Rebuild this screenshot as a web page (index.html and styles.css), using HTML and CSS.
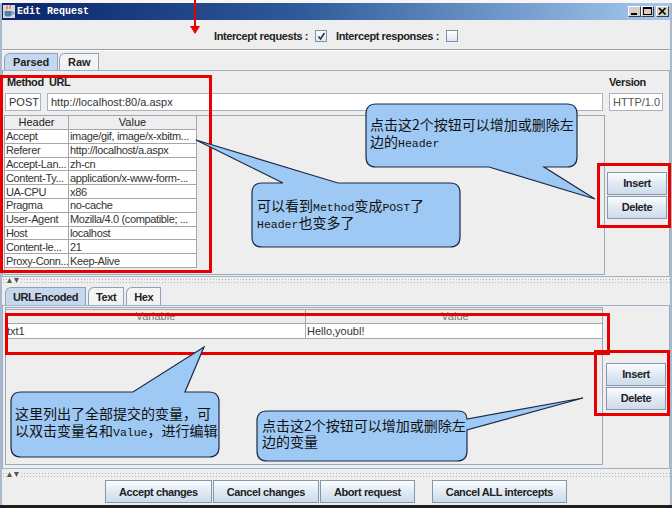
FILE: index.html
```html
<!DOCTYPE html>
<html>
<head>
  <meta charset="utf-8">
  <title>Edit Request</title>
  <link rel="stylesheet" href="styles.css">
</head>
<body>
  <div class="desktop"></div>

  <div class="window">
    <div class="titlebar">
      <svg class="app-icon" width="12" height="13" viewBox="0 0 12 13">
        <rect x="0" y="0" width="12" height="13" fill="#d9d6e6"/>
        <path d="M4 1c1.2 1-1 2 0 3.5M7 0.5c1.2 1.2-1 2 0 3.5" stroke="#e76f00" stroke-width="1.2" fill="none"/>
        <path d="M1.5 6h7v3a2.5 2.5 0 0 1-2.5 2.5h-2a2.5 2.5 0 0 1-2.5-2.5z" fill="#5382a1"/>
        <path d="M8.5 7h1.3a1.1 1.1 0 0 1 0 2.2H8.5" stroke="#5382a1" fill="none"/>
      </svg>
      <span class="title">Edit Request</span>
      <div class="controls">
        <span class="ctl"><svg width="11" height="9" viewBox="0 0 11 9"><rect x="2" y="6" width="6" height="2" fill="#000"/></svg></span>
        <span class="ctl"><svg width="11" height="9" viewBox="0 0 11 9"><rect x="1.5" y="0.5" width="8" height="7" fill="none" stroke="#000"/><rect x="1.5" y="0.5" width="8" height="1.5" fill="#000"/></svg></span>
        <span class="ctl close"><svg width="11" height="9" viewBox="0 0 11 9"><path d="M2 1l6.5 6.5M8.5 1L2 7.5" stroke="#000" stroke-width="1.7"/></svg></span>
      </div>
    </div>

    <div class="intercept">
      <span>Intercept requests :</span>
      <span class="check"><svg width="9" height="9" viewBox="0 0 9 9"><path d="M1.5 4.5l2 2.5 4-6" stroke="#22344d" stroke-width="1.6" fill="none"/></svg></span>
      <span>Intercept responses :</span>
      <span class="check"></span>
    </div>
    <div class="sep"></div>

    <div class="tabs">
      <div class="tab active">Parsed</div>
      <div class="tab">Raw</div>
    </div>
    <div class="panel top-panel">
      <div class="request-line">
        <span class="lbl">Method</span>
        <span class="lbl">URL</span>
        <span class="lbl version">Version</span>
        <div class="field">POST</div>
        <div class="field">http://localhost:80/a.aspx</div>
        <div class="field muted">HTTP/1.0</div>
      </div>
      <div class="editor-row">
        <div class="scroll headers-scroll">
          <table class="grid headers">
            <colgroup><col class="c-name"><col class="c-value"></colgroup>
            <tr><th>Header</th><th>Value</th></tr>
            <tr><td>Accept</td><td>image/gif, image/x-xbitm...</td></tr>
            <tr><td>Referer</td><td>http://localhost/a.aspx</td></tr>
            <tr><td>Accept-Lan...</td><td>zh-cn</td></tr>
            <tr><td>Content-Ty...</td><td>application/x-www-form-...</td></tr>
            <tr><td>UA-CPU</td><td>x86</td></tr>
            <tr><td>Pragma</td><td>no-cache</td></tr>
            <tr><td>User-Agent</td><td>Mozilla/4.0 (compatible; ...</td></tr>
            <tr><td>Host</td><td>localhost</td></tr>
            <tr><td>Content-le...</td><td>21</td></tr>
            <tr><td>Proxy-Conn...</td><td>Keep-Alive</td></tr>
          </table>
        </div>
        <div class="side">
          <button class="btn">Insert</button>
          <button class="btn">Delete</button>
        </div>
      </div>
    </div>

    <div class="splitter top-split">
      <div class="grip">
        <svg class="arrows" width="14" height="5" viewBox="0 0 14 5"><path d="M0 5L2.5 0 5 5z" fill="#555"/><path d="M7 0h5l-2.5 5z" fill="#555"/></svg>
      </div>
    </div>

    <div class="tabs lower">
      <div class="tab active">URLEncoded</div>
      <div class="tab">Text</div>
      <div class="tab">Hex</div>
    </div>
    <div class="panel bottom-panel">
      <div class="editor-row">
        <div class="scroll vars-scroll">
          <table class="grid vars">
            <colgroup><col class="c-var"><col class="c-val"></colgroup>
            <tr><th>Variable</th><th>Value</th></tr>
            <tr><td>txt1</td><td>Hello,youbl!</td></tr>
          </table>
        </div>
        <div class="side">
          <button class="btn">Insert</button>
          <button class="btn">Delete</button>
        </div>
      </div>
    </div>

    <div class="splitter bottom-split">
      <div class="grip">
        <svg class="arrows" width="14" height="5" viewBox="0 0 14 5"><path d="M0 5L2.5 0 5 5z" fill="#555"/><path d="M7 0h5l-2.5 5z" fill="#555"/></svg>
      </div>
    </div>

    <div class="actions">
      <button class="btn">Accept changes</button>
      <button class="btn">Cancel changes</button>
      <button class="btn">Abort request</button>
      <button class="btn far">Cancel ALL intercepts</button>
    </div>
  </div>
  <div class="taskbar"></div>

  <!-- annotations drawn over the screenshot -->
  <svg class="overlay" width="672" height="508" viewBox="0 0 672 508">
    <line x1="195" y1="0" x2="195" y2="28" stroke="#e60000" stroke-width="2"/>
    <polygon points="190,26 200,26 195,34" fill="#e60000"/>

    <g fill="none" stroke="#e60000" stroke-width="3">
      <rect x="1.5" y="76.5" width="209" height="195"/>
      <rect x="598.5" y="164.5" width="71" height="62"/>
      <rect x="6.5" y="314.5" width="602" height="39"/>
      <rect x="595.5" y="351.5" width="73" height="63"/>
    </g>

    <g fill="#9ec9f4" stroke="#1c2a48" stroke-width="1.2">
      <path d="M376,104 H567 Q577,104 577,114 V157 Q577,167 567,167 H544 L595,199 L489,167 H376 Q366,167 366,157 V114 Q366,104 376,104 Z"/>
      <path d="M262,183 H283 L196,140 L338,183 H450 Q460,183 460,193 V237 Q460,247 450,247 H262 Q252,247 252,237 V193 Q252,183 262,183 Z"/>
      <path d="M21,392 H133 L204,347 L185,392 H209 Q219,392 219,402 V447 Q219,457 209,457 H21 Q11,457 11,447 V402 Q11,392 21,392 Z"/>
      <path d="M267,411 H458 Q467,411 467,419 L583,398 L467,430 V451 Q467,461 457,461 H267 Q257,461 257,451 V421 Q257,411 267,411 Z"/>
    </g>
  </svg>

  <div class="note n1">点击这2个按钮可以增加或删除左<br>边的<span class="en">Header</span></div>
  <div class="note n2">可以看到<span class="en">Method</span>变成<span class="en">POST</span>了<br><span class="en">Header</span>也变多了</div>
  <div class="note n3">这里列出了全部提交的变量，可<br>以双击变量名和<span class="en">Value</span>，进行编辑</div>
  <div class="note n4">点击这2个按钮可以增加或删除左<br>边的变量</div>
</body>
</html>
```

FILE: styles.css
```css
* {
  box-sizing: border-box;
}

body {
  margin: 0;
  width: 672px;
  height: 508px;
  overflow: hidden;
  position: relative;
  background: #fff;
  font-family: "Liberation Sans", Arial, sans-serif;
  font-size: 11px;
  color: #222;
}

.desktop {
  height: 3px;
  background: #f6f6f6;
}

.window {
  height: 502px;
  display: flex;
  flex-direction: column;
  background: #eeeeee;
  border-left: 2px solid #a9b8cb;
  border-right: 2px solid #a9b8cb;
}

.taskbar {
  height: 3px;
  background: #1e1e1e;
}

/* title bar */
.titlebar {
  flex: none;
  height: 17px;
  display: flex;
  align-items: center;
  padding-left: 1px;
  background: linear-gradient(to right, #0a246a 0%, #2f5b9a 45%, #a6caf0 100%);
}

.app-icon {
  flex: none;
}

.title {
  margin-left: 2px;
  color: #fff;
  font: bold 10px "Liberation Mono", monospace;
}

.controls {
  margin-left: auto;
  margin-right: 1px;
  display: flex;
}

.ctl {
  width: 13px;
  height: 11px;
  display: flex;
  align-items: center;
  justify-content: center;
  background: #d4d0c8;
  border: 1px solid;
  border-color: #fff #404040 #404040 #fff;
}

.ctl.close {
  margin-left: 2px;
}

/* intercept options */
.intercept {
  flex: none;
  height: 28px;
  padding-top: 4px;
  display: flex;
  align-items: center;
  justify-content: center;
  font-weight: bold;
  letter-spacing: -0.4px;
}

.check {
  width: 12px;
  height: 12px;
  margin: 0 9px 0 7px;
  display: flex;
  align-items: center;
  justify-content: center;
  border: 1px solid #7d91a8;
  background: linear-gradient(#ffffff, #dce6f1);
}

.check:last-child {
  margin-right: 0;
}

.sep {
  flex: none;
  margin: 1px 0 2px;
  border-top: 1px solid #a0a0a0;
  border-bottom: 1px solid #fff;
}

/* tabs */
.tabs {
  flex: none;
  height: 17px;
  display: flex;
  align-items: flex-end;
  gap: 1px;
  padding-left: 2px;
}

.tab {
  height: 17px;
  padding: 0 8px;
  display: flex;
  align-items: center;
  border: 1px solid #8ea3bb;
  border-bottom: none;
  border-top-left-radius: 6px;
  background: #f3f3f3;
  font-weight: bold;
  letter-spacing: -0.1px;
}

.tab.active {
  background: #c6d8ee;
}

.tabs.lower {
  height: 18px;
  gap: 2px;
  padding-left: 3px;
}

.tabs.lower .tab {
  height: 18px;
  padding: 0 7px;
  letter-spacing: -0.4px;
}

/* panels */
.panel {
  display: flex;
  flex-direction: column;
  border: 1px solid #9db0c6;
}

.top-panel {
  flex: none;
  height: 207px;
}

.bottom-panel {
  flex: none;
  height: 164px;
}

.request-line {
  display: grid;
  grid-template-columns: 36px 556px 54px;
  grid-template-rows: 15px 18px;
  column-gap: 6px;
  row-gap: 3px;
  padding: 4px 0 0 2px;
}

.lbl {
  font-weight: bold;
  letter-spacing: -0.4px;
  line-height: 15px;
  padding-left: 2px;
}

.lbl.version {
  padding-left: 0;
}

.field {
  background: #fff;
  border: 1px solid #a7b3c2;
  padding: 0 3px;
  line-height: 16px;
  color: #333;
  white-space: nowrap;
  overflow: hidden;
}

.field.muted {
  color: #555;
}

.editor-row {
  flex: 1;
  display: flex;
  min-height: 0;
}

.top-panel .editor-row {
  margin-top: 4px;
  padding-bottom: 1px;
}

.bottom-panel .editor-row {
  padding: 1px 0 3px;
}

.scroll {
  border: 1px solid #9aa8b8;
  background: #eeeeee;
  overflow: hidden;
}

.headers-scroll {
  width: 601px;
  margin-left: 1px;
}

.vars-scroll {
  width: 598px;
  margin-left: 2px;
}

.side {
  flex: 1;
  display: flex;
  flex-direction: column;
  align-items: center;
  justify-content: center;
  gap: 1px;
}

/* tables */
.grid {
  border-collapse: collapse;
  table-layout: fixed;
  margin: -1px 0 0 -1px;
}

.grid th,
.grid td {
  border: 1px solid #a6a6a6;
  padding: 0 1px;
  white-space: nowrap;
  overflow: hidden;
  font-weight: normal;
  font-size: 11px;
}

.grid th {
  height: 14px;
  line-height: 13px;
  text-align: center;
  background: #eeeeee;
  color: #222;
}

.grid td {
  height: 13.8px;
  line-height: 12px;
  background: #fff;
  color: #333;
  letter-spacing: -0.35px;
}

.headers {
  width: 192px;
}

.c-name {
  width: 64px;
}

.c-value {
  width: 128px;
}

.vars {
  width: 599px;
  margin-top: 1px;
}

.c-var {
  width: 300px;
}

.c-val {
  width: 299px;
}

.vars th {
  height: 14px;
  color: #777;
}

.vars td {
  height: 15px;
  line-height: 14px;
  letter-spacing: 0;
}

/* buttons */
.btn {
  height: 23px;
  padding: 0 13px;
  font: bold 11px "Liberation Sans", Arial, sans-serif;
  letter-spacing: -0.4px;
  color: #222;
  border: 1px solid #8497ad;
  border-radius: 0;
  background: linear-gradient(to bottom, #fbfdff 0%, #e3ecf5 45%, #cddbea 100%);
}

.side .btn {
  width: 60px;
  padding: 0;
}

/* split pane dividers */
.splitter {
  flex: none;
  display: flex;
  align-items: flex-start;
}

.top-split {
  height: 10px;
  padding-top: 1px;
}

.bottom-split {
  height: 9px;
  padding-top: 3px;
}

.grip {
  flex: 1;
  height: 5px;
  display: flex;
  align-items: center;
  padding-left: 5px;
  background: radial-gradient(circle, #b3b3b3 0.8px, transparent 1px) 0 0 / 3px 3px;
}

.arrows {
  background: #eeeeee;
}

.actions {
  flex: none;
  height: 27px;
  display: flex;
  align-items: center;
  justify-content: center;
  gap: 1px;
}

.actions .far {
  margin-left: 16px;
}

/* annotation layer */
.overlay {
  position: absolute;
  left: 0;
  top: 0;
}

.note {
  position: absolute;
  font-family: "Noto Sans CJK SC", sans-serif;
  font-size: 14px;
  line-height: 17px;
  color: #111;
  white-space: nowrap;
}

.note .en {
  font-family: "Liberation Mono", monospace;
  font-size: 11.5px;
}

.n1 {
  left: 370px;
  top: 116px;
}

.n2 {
  left: 257px;
  top: 198px;
  line-height: 15px;
}

.n3 {
  left: 15px;
  top: 405px;
  line-height: 17px;
}

.n4 {
  left: 262px;
  top: 417px;
  line-height: 16px;
}
```
